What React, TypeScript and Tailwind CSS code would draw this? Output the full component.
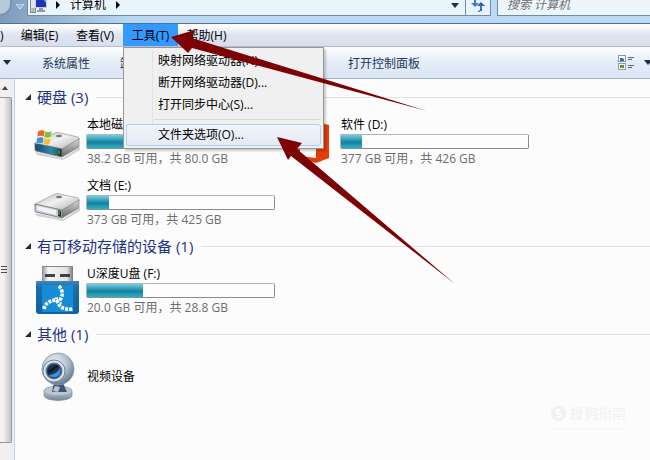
import React from 'react';

type DriveProps = {
  icon: React.ReactNode;
  name: string;
  used: number;
  info: string;
};

const DropArrow: React.FC = () => (
  <svg viewBox="0 0 8 5" className="h-[5px] w-2 shrink-0">
    <path d="M0 0h8L4 5z" fill="#1c2b4e" />
  </svg>
);

const ComputerIcon: React.FC = () => (
  <svg viewBox="0 0 18 18" className="h-[18px] w-[18px]">
    <rect x="0.5" y="2.5" width="5" height="14" fill="#dfe3ea" stroke="#7c8696" />
    <path d="M1.500 13h3M1.500 15h3" stroke="#7c8696" />
    <rect x="5.500" y="0.500" width="11" height="11" fill="#1b35b8" stroke="#c5cfe0" />
    <path d="M11 1h5v6z" fill="#6f9bea" />
    <path d="M9 12h4v2h2v2H7v-2h2z" fill="#8d98aa" />
  </svg>
);

const RefreshIcon: React.FC = () => (
  <svg viewBox="0 0 14 14" className="h-[14px] w-[14px]">
    <path d="M4 0v6M10 13V7" stroke="#3c7cc4" strokeWidth="2" fill="none" />
    <path d="M0 5h8L4 9z" fill="#3c7cc4" />
    <path d="M6 8h8l-4-4zM7 14q3 0 4-3H9q0 2-2 2z" fill="#2a62ac" />
  </svg>
);

const ViewIcon: React.FC = () => (
  <svg viewBox="0 0 16 16" className="h-4 w-4">
    <rect x="0.500" y="0.500" width="7" height="6" fill="#f4fafd" stroke="#8a99ac" />
    <path d="M2 3h2l2 1v2H2z" fill="#2f7390" />
    <rect x="0.500" y="8.500" width="7" height="6" fill="#f4fafd" stroke="#8a99ac" />
    <path d="M2 10h4v3H2z" fill="#708b35" />
    <path d="M10 2.500h6M10 4.500h4M10 10.500h6M10 12.500h4" stroke="#53637c" />
  </svg>
);

const DriveIcon: React.FC<{ system?: boolean }> = ({ system }) => (
  <svg viewBox="0 0 48 32" className="mt-1 h-8 w-12">
    <defs>
      <linearGradient id="driveTop" x1="0" y1="0" x2="1" y2="1">
        <stop offset="0" stopColor="#b9b9bb" />
        <stop offset="0.45" stopColor="#f1f1f2" />
        <stop offset="1" stopColor="#a5a5a8" />
      </linearGradient>
      <linearGradient id="driveSide" x1="0" y1="0" x2="0" y2="1">
        <stop offset="0" stopColor="#d8d8da" />
        <stop offset="1" stopColor="#66666a" />
      </linearGradient>
      <linearGradient id="driveSystem" x1="0" y1="0" x2="1" y2="0">
        <stop offset="0" stopColor="#174b72" />
        <stop offset="0.6" stopColor="#2a87a8" />
        <stop offset="1" stopColor="#1d5542" />
      </linearGradient>
    </defs>
    <path d="M2 23l28 6 17-11v3L30 31 4 26z" fill="#d2d2d4" />
    <path d="M2 14L22 4q2-1 5 0l18 4q2 1 1 3L30 22 2 16z" fill="url(#driveTop)" stroke="#9a9a9d" strokeWidth="0.700" />
    <path d="M29 20L46 10v8L29 28z" fill="url(#driveSide)" stroke="#77777b" strokeWidth="0.600" />
    <path
      d="M2 14l27 6v8L3 22q-1 0-1-2z"
      fill={system ? 'url(#driveSystem)' : '#c9cbd2'}
      stroke="#69696d"
      strokeWidth="0.800"
    />
    {!system && <path d="M4 16l19 4v5L4 20z" fill="#f1f1f7" />}
    <path d="M25 20l3 1v6l-3-1z" fill="#17301c" />
    <path d="M26 21v4" stroke="#6bd04f" />
    <ellipse cx="26" cy="7" rx="3" ry="1.300" fill="#77777b" />
    {system && (
      <g stroke="#fff" strokeWidth="0.400">
        <path d="M5 2q4-2 7 0l-1 6q-3-2-7 0z" fill="#e8662a" />
        <path d="M12 2q3 2 7 0l-1 6q-4 2-7 0z" fill="#86bd3a" />
        <path d="M4 9q4-2 7 0l-1 6q-4-2-7 0z" fill="#3d8fd8" />
        <path d="M11 9q3 2 7 0l-1 6q-4 2-7 0z" fill="#f5c22f" />
      </g>
    )}
  </svg>
);

const OfficeIcon: React.FC = () => (
  <svg viewBox="-3 0 42 42" className="h-[42px] w-[42px]">
    <path d="M1 9L26 0l13 3v33l-13 5L1 33l25 3V7L10 11v18l-9 4z" fill="#e63c0c" />
  </svg>
);

const UsbIcon: React.FC = () => (
  <svg viewBox="0 0 44 48" className="mb-1 ml-[3px] h-12 w-11">
    <defs>
      <linearGradient id="usbPlug" x1="0" y1="0" x2="1" y2="0">
        <stop offset="0" stopColor="#8d8d8d" />
        <stop offset="0.2" stopColor="#f5f5f5" />
        <stop offset="0.8" stopColor="#e2e2e2" />
        <stop offset="1" stopColor="#777" />
      </linearGradient>
      <linearGradient id="usbBody" x1="0" y1="0" x2="0" y2="1">
        <stop offset="0" stopColor="#3f86bd" />
        <stop offset="0.2" stopColor="#1c6cae" />
        <stop offset="1" stopColor="#0f609f" />
      </linearGradient>
    </defs>
    <path d="M6 0h31v17H6z" fill="url(#usbPlug)" />
    <path d="M6 0.500h31" stroke="#888" />
    <path d="M9 8h10v3H9zM24 8h10v3H24z" fill="#3f4245" />
    <path d="M0 15h43v30q0 3-3 3H3q-3 0-3-3z" fill="url(#usbBody)" />
    <path d="M6 19h31v27H6z" fill="#168bd6" />
    <g fill="none" stroke="#fff" strokeDasharray="3 1.200">
      <path d="M23 20q6 7 1 14" strokeWidth="3.600" />
      <path d="M8 43q2-9 14-9" strokeWidth="3.600" />
      <path d="M21 34q3 11 16 9" strokeWidth="3.600" />
      <path d="M17 36q0-4 4-4t4 6" strokeWidth="1.500" />
    </g>
  </svg>
);

const WebcamIcon: React.FC = () => (
  <svg viewBox="0 0 34 49" className="mb-[2px] h-[49px] w-[34px]">
    <defs>
      <radialGradient id="camBody" cx="0.4" cy="0.3" r="0.7">
        <stop offset="0" stopColor="#eef3f9" />
        <stop offset="0.6" stopColor="#aebccb" />
        <stop offset="1" stopColor="#687b91" />
      </radialGradient>
      <linearGradient id="camBase" x1="0" y1="0" x2="0" y2="1">
        <stop offset="0" stopColor="#dbe5ee" />
        <stop offset="1" stopColor="#73869a" />
      </linearGradient>
    </defs>
    <path d="M3 39q0-4 14-5 14 1 14 5v5q-2 4-14 4.500Q5 48 3 44z" fill="url(#camBase)" stroke="#75879a" strokeWidth="0.700" />
    <ellipse cx="17" cy="39" rx="13" ry="4" fill="#b9c8d6" />
    <path d="M13 31h9l4 9H11z" fill="#43566b" />
    <path d="M14 34l5 1-2 5-5-1z" fill="#b6c5d3" />
    <circle cx="17" cy="17" r="16" fill="url(#camBody)" stroke="#8497aa" strokeWidth="0.800" />
    <circle cx="13" cy="19" r="11" fill="#dce6ef" stroke="#6f8398" />
    <circle cx="13" cy="19" r="8.500" fill="#5c748e" />
    <circle cx="13" cy="19" r="7" fill="#1b3350" />
    <path d="M8 23q8-1 11-7 2 7-4 9-5 1-7-2z" fill="#3d91dc" />
    <path d="M7 19l9-6 2 1-10 7z" fill="#0d1620" />
  </svg>
);

const Capacity: React.FC<{ used: number; label: string }> = ({ used, label }) => (
  <div
    role="meter"
    aria-label={label}
    aria-valuenow={used}
    className="h-[15px] rounded-[2px] border border-[#b4b4b4] border-b-[#8b8b8b] border-r-[#8b8b8b] bg-[#fcfdfd]"
  >
    <div
      className="h-full bg-linear-to-b from-[#6ed0e6] via-[#0f829e] via-55% to-[#2fb0c6]"
      style={{ width: `${used}%` }}
    />
  </div>
);

const Drive: React.FC<DriveProps> = ({ icon, name, used, info }) => (
  <div className="flex h-[52px] w-[254px] shrink-0">
    <div className="flex w-[53px] shrink-0 items-center pt-1">{icon}</div>
    <div className="w-[189px]">
      <div className="pl-px text-xs leading-[19px] text-black">{name}</div>
      <Capacity used={used} label={name} />
      <div className="pl-px text-xs leading-5 text-[#6d6d6d]">{info}</div>
    </div>
  </div>
);

const Section: React.FC<{ title: string; children: React.ReactNode }> = ({ title, children }) => (
  <section className="pt-[7px]">
    <h2 className="flex h-[22px] items-center text-[15px] text-[#1e3287]">
      <svg viewBox="0 0 6 6" className="mr-[6px] h-[6px] w-[6px]">
        <path d="M6 0v6H0z" fill="#2b2b2b" />
      </svg>
      <span className="whitespace-nowrap">{title}</span>
      <span className="ml-2 h-px flex-1 bg-[#dfe2e8]" />
    </h2>
    <div className="flex flex-wrap gap-y-[9px] pt-[7px] pl-2">{children}</div>
  </section>
);

const menuItems = ['映射网络驱动器(N)...', '断开网络驱动器(D)...', '打开同步中心(S)...'];

const ToolsMenu: React.FC = () => (
  <div
    role="menu"
    className="absolute top-full left-0 z-10 mt-px w-[201px] border border-[#979797] bg-[#f0f0f0] p-[2px] text-black shadow-[2px_2px_2px_rgba(0,0,0,0.2)]"
  >
    <div className="ml-[26px] border-l border-[#e2e3e3] pb-1 pl-px">
      {menuItems.map((item) => (
        <button key={item} role="menuitem" className="block h-[22px] w-full pl-[4px] text-left whitespace-nowrap">
          {item}
        </button>
      ))}
      <div className="mt-[3px] h-px bg-[#d9d9d9]" />
    </div>
    <button
      role="menuitem"
      className="block h-[22px] w-full rounded-[3px] border border-[#aecff7] bg-linear-to-b from-[#f1f4f8] to-[#e4ebf5] pl-[31px] text-left"
    >
      文件夹选项(O)...
    </button>
  </div>
);

const App: React.FC = () => (
  <div className="relative flex h-screen flex-col overflow-hidden bg-[#fcfcfc] font-['Open_Sans','Noto_Sans_CJK_SC',sans-serif] text-xs">
    <header className="flex h-6 shrink-0 border-b border-[#53708a] bg-linear-to-r from-[#7d9cbb] via-[#b9d8f5] via-20% to-[#bcdaf7]">
      <div className="flex h-4 flex-1 overflow-hidden">
        <button aria-label="前进" className="-mt-3 -ml-3 h-7 w-6 shrink-0 rounded-full border-2 border-[#8393a6] bg-[#b4cadd]" />
        <button aria-label="最近浏览的位置" className="flex w-[15px] items-center justify-center pb-1">
          <svg viewBox="0 0 8 5" className="h-[5px] w-2">
            <path d="M0 0h8L4 5z" fill="#8fb4d8" stroke="#dcecfa" />
          </svg>
        </button>
        <div className="flex flex-1 border-b border-l border-[#6f8ba5] bg-[#eaf4fd]">
          <div className="-mt-2 flex h-[26px] flex-1 items-center gap-2 pl-[2px]">
            <ComputerIcon />
            <svg viewBox="0 0 4 8" className="h-2 w-1">
              <path d="M0 0l4 4-4 4z" />
            </svg>
            <span className="pl-[2px] text-black">计算机</span>
            <svg viewBox="0 0 4 8" className="ml-[2px] h-2 w-1">
              <path d="M0 0l4 4-4 4z" />
            </svg>
          </div>
          <button aria-label="历史记录" className="flex w-5 items-center justify-center pb-1">
            <DropArrow />
          </button>
          <button
            aria-label="刷新"
            className="flex w-[26px] items-center justify-center border-x border-[#6f8ba5] pb-[6px]"
          >
            <RefreshIcon />
          </button>
        </div>
        <input
          aria-label="搜索"
          placeholder="搜索 计算机"
          className="-mt-2 ml-[6px] h-6 w-[153px] border border-r-0 border-[#6f8ba5] bg-[#eef6fd] pl-[9px] italic placeholder:text-[#707070]"
        />
      </div>
    </header>

    <nav className="flex h-[23px] shrink-0 border-b border-[#b3bdd1] bg-linear-to-b from-[#fbfcfe] from-10% via-[#dfe4f1] via-50% to-[#d8deee] text-black">
      <button className="w-3 pt-[2px] text-left">)</button>
      <button className="w-[55px] pt-[2px]">编辑(E)</button>
      <button className="w-[56px] pt-[2px]">查看(V)</button>
      <div className="relative flex">
        <button aria-haspopup="menu" aria-expanded="true" className="w-[55px] bg-[#3399ff] pt-[2px]">
          工具(T)
        </button>
        <ToolsMenu />
      </div>
      <button className="w-[57px] pt-[2px]">帮助(H)</button>
    </nav>

    <div className="flex h-8 shrink-0 items-center border-b border-[#9fb3cd] bg-linear-to-b from-[#fafcfe] from-10% via-[#e4ecf7] via-50% to-[#dbe5f3] text-[#1e395b]">
      <button aria-label="组织" className="mr-[31px] ml-[3px]">
        <DropArrow />
      </button>
      <div className="flex flex-1 gap-[30px] pt-[2px]">
        <button>系统属性</button>
        <button>卸载或更改程序</button>
        <button>映射网络驱动器</button>
        <button>打开控制面板</button>
      </div>
      <button aria-label="更改您的视图">
        <ViewIcon />
      </button>
      <button aria-label="更多选项" className="ml-[10px] w-[6px] overflow-hidden">
        <DropArrow />
      </button>
    </div>

    <div className="flex min-h-0 flex-1">
      <div className="flex w-[15px] shrink-0 flex-col border-r border-[#bcd0e6] bg-[#f0f0f0] pr-[2px]">
        <button aria-label="向上滚动" className="flex h-[18px] items-center pl-[2px]">
          <svg viewBox="0 0 6 4" className="h-1 w-[6px]">
            <path d="M0 4h6L3 0z" fill="#444" />
          </svg>
        </button>
        <div className="flex flex-1 items-center rounded-r-[2px] border border-l-0 border-[#979797] bg-linear-to-r from-[#f3f3f3] from-30% to-[#c2c2c6]">
          <svg viewBox="0 0 7 8" className="h-2 w-[7px]">
            <path d="M1 0.500h6M1 3.500h6M1 6.500h6" stroke="#4d4d4d" />
          </svg>
        </div>
        <div className="h-[17px]" />
      </div>

      <main className="min-w-0 flex-1 pl-[10px]">
        <Section title="硬盘 (3)">
          <Drive icon={<DriveIcon system />} name="本地磁盘 (C:)" used={52} info="38.2 GB 可用，共 80.0 GB" />
          <Drive icon={<OfficeIcon />} name="软件 (D:)" used={11} info="377 GB 可用，共 426 GB" />
          <Drive icon={<DriveIcon />} name="文档 (E:)" used={12} info="373 GB 可用，共 425 GB" />
        </Section>
        <Section title="有可移动存储的设备 (1)">
          <Drive icon={<UsbIcon />} name="U深度U盘 (F:)" used={30} info="20.0 GB 可用，共 28.8 GB" />
        </Section>
        <Section title="其他 (1)">
          <div className="flex h-[50px] items-center pl-2">
            <WebcamIcon />
            <span className="ml-3 text-black">视频设备</span>
          </div>
        </Section>
      </main>
    </div>

    <div className="absolute right-6 bottom-[30px] text-[#f1f1f1]">
      <div className="flex items-center gap-1 text-sm leading-5">
        <span className="h-[15px] w-[15px] rounded-full bg-[#f1f1f1] text-center text-xs leading-[15px] font-bold text-white">
          S
        </span>
        搜狗指南
      </div>
      <div className="mt-[5px] h-[2px] bg-[#f8f8f8]" />
    </div>

    <svg viewBox="0 0 650 460" className="pointer-events-none absolute top-0 left-0 z-20 h-[460px] w-[650px]">
      <g fill="#7d0204">
        <path d="M171 37L195 30L192 38L427 111L192 48L188 53z" />
        <path d="M277 137L302 143L297 149L455 284L291 156L288 160z" />
      </g>
    </svg>
  </div>
);

export default App;
